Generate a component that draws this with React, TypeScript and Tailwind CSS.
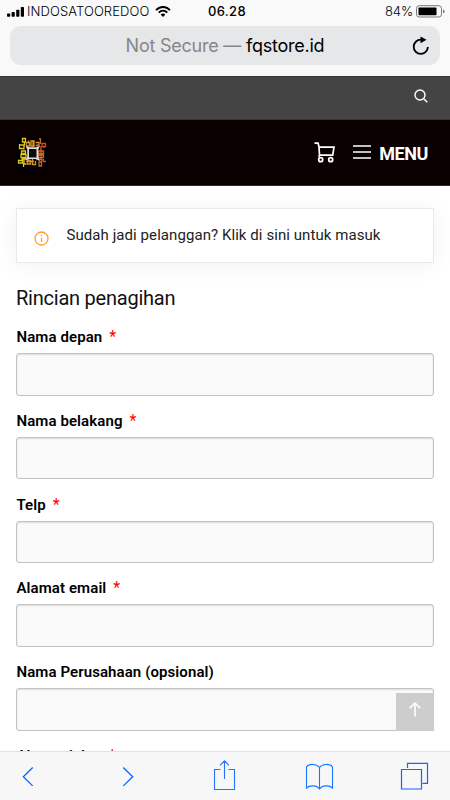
import React from "react";

const FIELDS = [
  { label: "Nama depan", required: true },
  { label: "Nama belakang", required: true },
  { label: "Telp", required: true },
  { label: "Alamat email", required: true },
  { label: "Nama Perusahaan (opsional)", required: false },
];

function StatusBar() {
  return (
    <div className="grid h-[23px] grid-cols-[1fr_auto_1fr] items-center font-['Inter','Liberation_Sans',sans-serif] text-[12.5px] leading-none text-black">
      <div className="flex items-center pl-[7px]">
        <svg width="17" height="10" viewBox="0 0 17 10">
          <rect x="0" y="6.5" width="3.2" height="3.3" rx=".7" />
          <rect x="4.6" y="5" width="3.2" height="4.8" rx=".7" />
          <rect x="9.2" y="2.7" width="3.2" height="7.1" rx=".7" />
          <rect x="13.8" y="0" width="3.2" height="9.8" rx=".7" />
        </svg>
        <span className="ml-[3px] w-[123px] whitespace-nowrap text-[13px] font-light tracking-[0.1px]">INDOSATOOREDOO</span>
        <svg className="ml-[5px]" width="16" height="11" viewBox="0 0 16 11" fill="none" stroke="#000" strokeWidth="2">
          <path d="M1 4.1C5-.1 11-.1 15 4.1M3.7 6.6c2.5-2.4 6.1-2.4 8.6 0" />
          <path d="M8 11 5.6 8.6q2.4-2 4.8 0Z" fill="#000" stroke="none" />
        </svg>
      </div>
      <span className="translate-x-[2px] text-[13px] font-medium tracking-[0.3px]">06.28</span>
      <div className="flex items-center justify-end pr-[5px]">
        <span className="text-[13px] font-light tracking-[-0.1px]">84%</span>
        <svg className="ml-[3px]" width="29" height="13" viewBox="0 0 29 13">
          <rect x=".5" y=".7" width="25" height="11.3" rx="2.7" fill="none" stroke="#777" />
          <rect x="2.5" y="2.5" width="18" height="7.8" rx=".8" />
          <path d="M27 4.5q1.6.5 1.6 1.9T27 8.3Z" fill="#777" />
        </svg>
      </div>
    </div>
  );
}

function Logo() {
  return (
    <svg width="32" height="32" viewBox="0 0 32 32" fill="none" strokeWidth="1.3">
      <rect width="32" height="32" fill="#000" />
      <g stroke="#dcc81e">
        <path d="M6.500 1.500h3v3.500h-3zM8.500 5v3H3M3.500 7v4.500h5M8 8.500v4M5.500 14h4v2.500h-4zM5 17.500h5v3H5zM2.500 23.500h4v2.500h-4zM8 21v6M5.500 22h5M7.500 30v-3h3" />
      </g>
      <g stroke="#d39228">
        <path d="M10.500 5.500h3v3.500h-3zM15 4v5h3V4zM19.500 5.500h3.500v3h-3.500M12.500 3.500v3M17 3v7M11.500 23.500h3v3.500h-3zM16.500 22v5.500h3V24M10 24.500h8" />
      </g>
      <g stroke="#cf6629">
        <path d="M23 2h1.500v5M22 7v4M22.500 14h5v2.500h-5zM22.500 18h5v2.500h-5zM25 11v12M23 25h2.500v4H23zM20 22.500h6v2" />
      </g>
      <path stroke="#e34027" d="M26 6.500h3.500v3H26zM28 9v2M24 10h2M27.500 22v2.500H30" />
      <path fill="#dcdce4" d="m9.500 9 4 1.300h7L24 9l-1.700 3.500v7.500L24 24l-4-2h-6l-4.500 1.500 1.800-4v-7Z" />
      <path fill="#0a0a0c" d="M13 12h7.500v8.500H13z" />
    </svg>
  );
}

function CartIcon() {
  return (
    <svg width="21" height="21" viewBox="0 0 21 21" fill="none" stroke="#fff" strokeWidth="1.7">
      <path d="M.5 1.200h3.600l1 4H20l-1.300 8H5.500l-.5-8M5.500 13.200 4.800 15" />
      <circle cx="6.700" cy="17.700" r="2" />
      <circle cx="16.700" cy="17.700" r="2" />
    </svg>
  );
}

function Label({ text, required }: { text: string; required: boolean }) {
  return (
    <label className="flex h-[18px] items-center whitespace-nowrap pl-[0.5px] text-[15px] font-semibold leading-[18px] tracking-[0.09px] text-black">
      {text}
      {required && <span className="ml-[7px] text-[16px] font-normal text-[#f00]">*</span>}
    </label>
  );
}

export default function App() {
  return (
    <div className="flex h-[800px] w-[450px] flex-col overflow-hidden bg-white font-['Roboto',sans-serif]">
      <header className="h-[76px] shrink-0 bg-[#f9f9f9]">
        <StatusBar />
        <div className="mx-[10px] mt-[3px] grid h-[39px] grid-cols-[40px_1fr_40px] items-center rounded-[11px] bg-[#e6e7e9] font-['Inter','Liberation_Sans',sans-serif]">
          <span />
          <div className="whitespace-nowrap text-center text-[18px] font-normal leading-none tracking-[-0.23px] text-[#858688]">
            Not Secure — <span className="text-black">fqstore.id</span>
          </div>
          <svg className="ml-[12px]" width="18" height="20" viewBox="0 0 18 20" fill="none" stroke="#000" strokeWidth="1.8">
            <path d="M10 3.700H8.800A7.100 7.100 0 1 0 15.900 11" />
            <path d="m8.500.5 6 3.300-6 3.400Z" fill="#000" stroke="none" />
          </svg>
        </div>
      </header>

      <div className="flex h-[44px] shrink-0 items-center justify-end border-t border-b border-t-[#363636] border-b-[#363636] bg-[#444] pr-[22px]">
        <svg className="-mt-[4px]" width="14" height="14" viewBox="0 0 14 14" fill="none" stroke="#fff" strokeWidth="1.400">
          <circle cx="6" cy="6" r="5" />
          <path d="m9.700 9.700 3.600 3.600" />
        </svg>
      </div>

      <nav className="flex h-[66px] shrink-0 items-center border-b border-[#3b2448] bg-[#0b0000] pr-[22px] pl-[16px] text-white">
        <Logo />
        <div className="ml-auto flex items-center">
          <CartIcon />
          <svg className="-mt-[2px] ml-[18px]" width="18" height="14" viewBox="0 0 18 14" stroke="#fff" strokeWidth="1.700">
            <path d="M0 1h18M0 7h18M0 13h18" />
          </svg>
          <span className="ml-[8px] pt-[2px] text-[18px] font-bold leading-none tracking-[-0.4px]">MENU</span>
        </div>
      </nav>

      <main className="flex min-h-0 flex-1 flex-col overflow-hidden px-[16px] pt-[22px]">
        <div className="flex h-[55px] shrink-0 items-center border border-[#e9e9e9] bg-white pl-[17px] shadow-[0_2px_25px_rgba(0,0,0,0.06)]">
          <svg className="mt-[5px]" width="15" height="15" viewBox="0 0 15 15" fill="none" stroke="#ff9d2e" strokeWidth="1.300">
            <circle cx="7.500" cy="7.500" r="6.500" />
            <path d="M7.500 6.700V11M7.500 4v1.200" />
          </svg>
          <span className="ml-[17.5px] whitespace-nowrap text-[15px] font-normal tracking-[0.07px] text-[#222]">
            Sudah jadi pelanggan? Klik di sini untuk masuk
          </span>
        </div>
        <h1 className="mt-[23px] h-[24px] shrink-0 text-[20px] font-normal leading-[24px] tracking-[-0.23px] text-[#111]">Rincian penagihan</h1>
        <form className="mt-[18px] flex flex-col">
          {FIELDS.map((f, i) => (
            <div key={f.label} className="h-[83.75px] shrink-0">
              <Label text={f.label} required={f.required} />
              <div className="mt-[7px] flex h-[42.5px] items-end justify-end rounded-[3px] border border-[#c2c2c2] bg-[#fafafa] shadow-[inset_0_1px_2px_rgba(0,0,0,0.12)]">
                {i === FIELDS.length - 1 && (
                  <button type="button" aria-label="Kembali ke atas" className="-mr-px -mb-px flex h-[38px] w-[38px] justify-center bg-[#cdcdcd] pt-[9px]">
                    <svg width="12" height="15" viewBox="0 0 12 15" fill="none" stroke="#fff" strokeWidth="1.600">
                      <path d="M6 14.500V1M.8 6.200 6 1l5.200 5.200" />
                    </svg>
                  </button>
                )}
              </div>
            </div>
          ))}
          <Label text="Alamat jalan" required />
        </form>
      </main>

      <footer className="flex h-[49px] shrink-0 items-start border-t border-[#e2e2e2] bg-[#f7f7f7] pl-[22px]">
        <svg className="mt-[14px]" width="12" height="22" viewBox="0 0 12 22" fill="none" stroke="#0a66ff" strokeWidth="1.300">
          <path d="M10.700 1.500 1.300 10.700l9.400 9.200" />
        </svg>
        <svg className="mt-[14px] ml-[88px]" width="12" height="22" viewBox="0 0 12 22" fill="none" stroke="#0a66ff" strokeWidth="1.300">
          <path d="m1.300 1.500 9.400 9.200-9.400 9.200" />
        </svg>
        <svg className="mt-[7px] ml-[79px]" width="23" height="31" viewBox="0 0 23 31" fill="none" stroke="#2870ff" strokeWidth="1.100">
          <path d="M7.500 10.500H1.500v20h20v-20h-6M11.500 20V2M7 6.300 11.500 1.800 16 6.300" />
        </svg>
        <svg className="mt-[11px] ml-[69px]" width="29" height="28" viewBox="0 0 29 28" fill="none" stroke="#1677ff" strokeWidth="1.100">
          <path d="M14.500 4.500C12 1 4.500 0 1.500 4v21c3-3 10.500-3 13 1 2.500-4 10-4 13-1V4c-3-4-10.500-3-13 .5Zm0 0v21.500" />
        </svg>
        <svg className="mt-[10px] ml-[66px]" width="29" height="28" viewBox="0 0 29 28" fill="none" stroke="#2460ff" strokeWidth="1.200">
          <path d="M1.500 7.500h20v19.500h-20ZM7.500 6V1.300h20v20H22.500" />
        </svg>
      </footer>
    </div>
  );
}
